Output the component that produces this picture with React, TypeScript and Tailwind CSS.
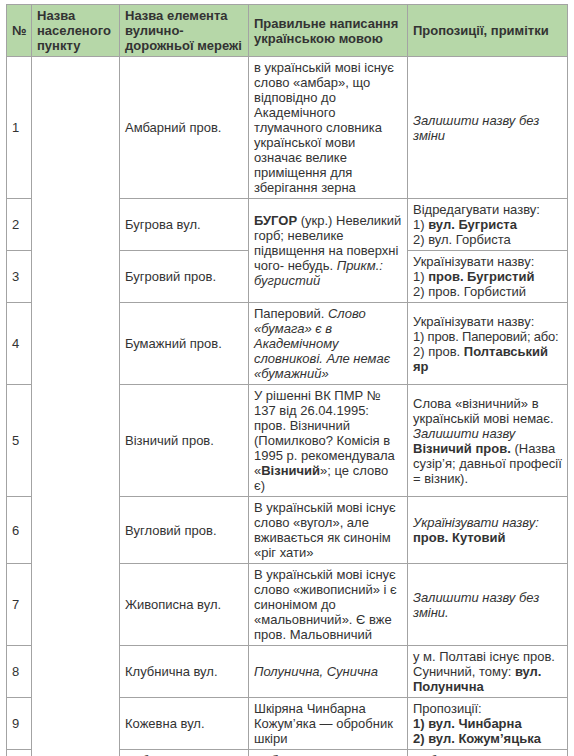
import React from 'react'

const td = 'border border-[#a3a3a3] px-[5px] py-[3px] align-middle'
const th = 'border border-[#a3a3a3] px-[5px] py-[3px] align-middle text-left font-bold text-[#333]'

export default function App() {
    return (
        <div className="bg-white pl-[6px] pt-[4px] font-['Liberation_Sans',Arial,sans-serif] text-[13px] leading-[15px] text-[#333]">
            <table className="w-[561px] table-fixed border-collapse">
                <colgroup>
                    <col className="w-[25px]" />
                    <col className="w-[88px]" />
                    <col className="w-[129px]" />
                    <col className="w-[159px]" />
                    <col className="w-[160px]" />
                </colgroup>
                <thead>
                    <tr className="bg-[#b6d7a8]">
                        <th className={th}>№</th>
                        <th className={th}>Назва населеного пункту</th>
                        <th className={th}>Назва елемента вулично-дорожньої мережі</th>
                        <th className={th}>Правильне написання українською мовою</th>
                        <th className={th}>Пропозиції, примітки</th>
                    </tr>
                </thead>
                <tbody>
                    <tr>
                        <td className={td}>1</td>
                        <td className={td} rowSpan={10}></td>
                        <td className={td}>Амбарний пров.</td>
                        <td className={td}>
                            в українській мові існує слово «амбар», що відповідно до Академічного тлумачного словника
                            української мови означає велике приміщення для зберігання зерна
                        </td>
                        <td className={td}>
                            <i>Залишити назву без зміни</i>
                        </td>
                    </tr>
                    <tr>
                        <td className={td}>2</td>
                        <td className={td}>Бугрова вул.</td>
                        <td className={td} rowSpan={2}>
                            <b>БУГОР</b> (укр.) Невеликий горб; невелике підвищення на поверхні чого- небудь.{' '}
                            <i>Прикм.: бугристий</i>
                        </td>
                        <td className={td}>
                            Відредагувати назву:
                            <br />
                            1) <b>вул. Бугриста</b>
                            <br />
                            2) вул. Горбиста
                        </td>
                    </tr>
                    <tr>
                        <td className={td}>3</td>
                        <td className={td}>Бугровий пров.</td>
                        <td className={td}>
                            Українізувати назву:
                            <br />
                            1) <b>пров. Бугристий</b>
                            <br />
                            2) пров. Горбистий
                        </td>
                    </tr>
                    <tr>
                        <td className={td}>4</td>
                        <td className={td}>Бумажний пров.</td>
                        <td className={td}>
                            Паперовий. <i>Слово «бумага» є в Академічному словникові. Але немає «бумажний»</i>
                        </td>
                        <td className={td}>
                            Українізувати назву:
                            <br />
                            <span className="whitespace-nowrap tracking-[-0.2px]">1) пров. Паперовий; або:</span>
                            <br />
                            2) пров. <b>Полтавський яр</b>
                        </td>
                    </tr>
                    <tr>
                        <td className={td}>5</td>
                        <td className={td}>Візничий пров.</td>
                        <td className={td}>
                            У рішенні ВК ПМР № 137 від 26.04.1995: пров. Візничний (Помилково? Комісія в 1995 р.
                            рекомендувала «<b>Візничий</b>»; це слово є)
                        </td>
                        <td className={td}>
                            Слова «візничний» в українській мові немає.
                            <br />
                            <i>Залишити назву</i>
                            <br />
                            <b>Візничий пров.</b> (Назва сузір’я; давньої професії = візник).
                        </td>
                    </tr>
                    <tr>
                        <td className={td}>6</td>
                        <td className={td}>Вугловий пров.</td>
                        <td className={td}>
                            В українській мові існує слово «вугол», але вживається як синонім «ріг хати»
                        </td>
                        <td className={td}>
                            <i>Українізувати назву:</i>
                            <br />
                            <b>пров. Кутовий</b>
                        </td>
                    </tr>
                    <tr>
                        <td className={td}>7</td>
                        <td className={td}>Живописна вул.</td>
                        <td className={td}>
                            В українській мові існує слово «живописний» і є синонімом до «мальовничий». Є вже пров.
                            Мальовничий
                        </td>
                        <td className={td}>
                            <i>Залишити назву без зміни.</i>
                        </td>
                    </tr>
                    <tr>
                        <td className={td}>8</td>
                        <td className={td}>Клубнична вул.</td>
                        <td className={td}>
                            <i>Полунична, Сунична</i>
                        </td>
                        <td className={td}>
                            у м. Полтаві існує пров. Суничний, тому: <b>вул. Полунична</b>
                        </td>
                    </tr>
                    <tr>
                        <td className={td}>9</td>
                        <td className={td}>Кожевна вул.</td>
                        <td className={td}>Шкіряна Чинбарна Кожум’яка — обробник шкіри</td>
                        <td className={td}>
                            Пропозиції:
                            <br />
                            <b>
                                1) вул. Чинбарна
                                <br />
                                2) вул. Кожум’яцька
                            </b>
                        </td>
                    </tr>
                    <tr>
                        <td className={td}>10</td>
                        <td className={td}>Набережна вул.</td>
                        <td className={td}>
                            <b>Набережна</b>
                        </td>
                        <td className={td}>Набережна вул.</td>
                    </tr>
                </tbody>
            </table>
        </div>
    )
}
